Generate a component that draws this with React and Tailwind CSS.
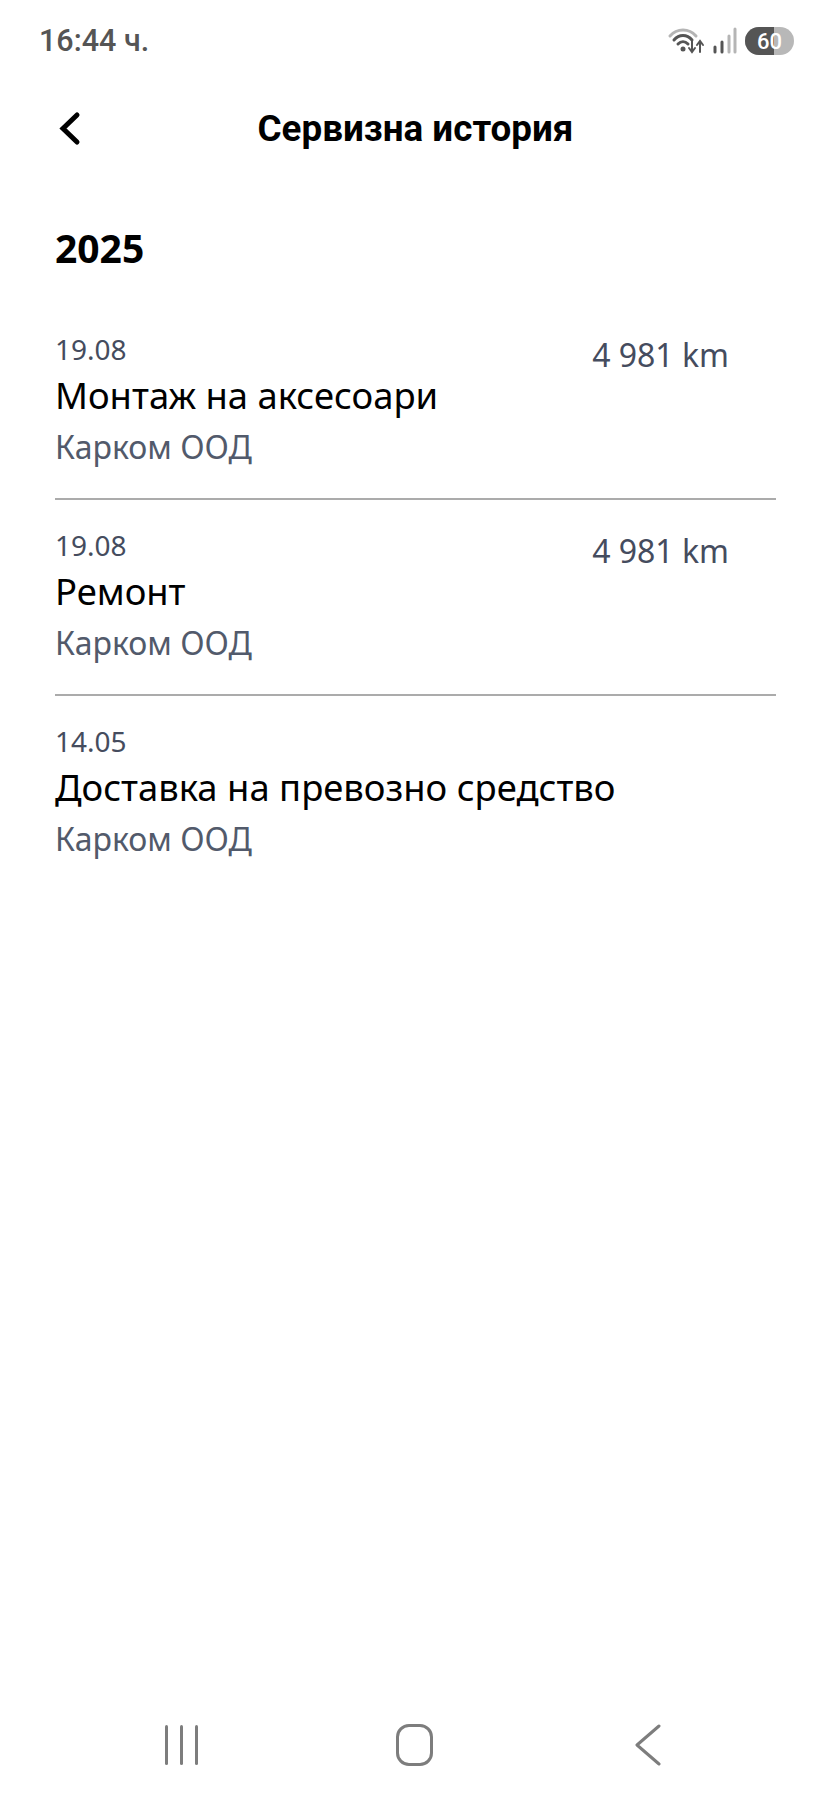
const Row = ({ date, title, km, last }) => (
  <div className={`flex h-[196px] justify-between pt-[27px] ${last ? "" : "border-b-2 border-[#ababab]"}`}>
    <div className="flex flex-col">
      <div className="text-[28px] leading-[36px] text-[#454c5e]">{date}</div>
      <div className="mt-[3px] text-[36.4px] leading-[50px] text-black">{title}</div>
      <div className="mt-[4px] text-[32px] leading-[46px] text-[#525a6b]">Карком ООД</div>
    </div>
    {km && <div className="mr-[47px] mt-[2px] text-[32px] leading-[44px] text-[#454c5e]">{km}</div>}
  </div>
);

export default function App() {
  return (
    <div className="flex h-[1800px] w-[831px] flex-col bg-white font-['Noto_Sans',sans-serif]">
      <div className="flex h-[82px] items-center justify-between pl-[39px] pr-[37px]">
        <span className="font-['Roboto',sans-serif] text-[30.5px] font-medium text-[#555555]">16:44 ч.</span>
        <div className="flex items-center gap-[7px]">
          <svg width="38" height="30" viewBox="0 0 36 30" fill="none" strokeLinecap="round">
            <path d="M2 10C9 2 21 2 28 10" stroke="#b5b5b5" strokeWidth="3" />
            <path d="M6 14C11 8 19 8 24 14" stroke="#555" strokeWidth="3" />
            <path d="M10 18C13 15 17 15 20 18" stroke="#555" strokeWidth="3" />
            <circle cx="15" cy="23" r="2.5" fill="#555" />
            <path d="M24 15V25M21 22L24 26L27 22" stroke="#555" strokeWidth="2" />
            <path d="M32 26V16M29 19L32 15L35 19" stroke="#555" strokeWidth="2" />
          </svg>
          <svg width="26" height="28" viewBox="0 0 24 28" fill="none" strokeLinecap="round" strokeWidth="3">
            <path d="M2 25V20" stroke="#555" />
            <path d="M9 25V15" stroke="#555" />
            <path d="M16 25V9" stroke="#b5b5b5" />
            <path d="M22 25V2" stroke="#b5b5b5" />
          </svg>
          <div className="relative flex h-[28px] w-[49px] items-center justify-center overflow-hidden rounded-full bg-[#b8b8b8]">
            <div className="absolute inset-y-0 left-0 w-[29px] bg-[#555555]" />
            <span className="relative font-['Roboto',sans-serif] text-[22px] font-medium text-white">60</span>
          </div>
        </div>
      </div>

      <div className="relative flex h-[94px] items-center justify-center">
        <svg className="absolute left-[58px] top-[28px]" width="24" height="38" viewBox="0 0 24 38" fill="none" stroke="#000" strokeWidth="5" strokeLinecap="round">
          <path d="M19 5L5 18.5L19 32" />
        </svg>
        <span className="font-['Roboto',sans-serif] text-[36.8px] font-bold text-black">Сервизна история</span>
      </div>

      <div className="px-[55px] pt-[47px]">
        <div className="text-[39px] font-bold leading-[50px] text-black">2025</div>
        <div className="mt-[31px] w-[721px]">
          <Row date="19.08" title="Монтаж на аксесоари" km="4 981 km" />
          <Row date="19.08" title="Ремонт" km="4 981 km" />
          <Row date="14.05" title="Доставка на превозно средство" last />
        </div>
      </div>

      <div className="mt-auto flex h-[103px] items-start pt-[27px]">
        <div className="ml-[165px] flex h-[42px] items-center gap-[12px]">
          <span className="h-[40px] w-[3px] rounded-full bg-[#7d7d7d]" />
          <span className="h-[40px] w-[3px] rounded-full bg-[#7d7d7d]" />
          <span className="h-[40px] w-[3px] rounded-full bg-[#7d7d7d]" />
        </div>
        <div className="ml-[198px] h-[42px] w-[37px] rounded-[13px] border-[3px] border-[#7d7d7d]" />
        <svg className="ml-[201px]" width="28" height="42" viewBox="0 0 28 42" fill="none" stroke="#7d7d7d" strokeWidth="3" strokeLinecap="round" strokeLinejoin="round">
          <path d="M25 2L3 21L25 40" />
        </svg>
      </div>
    </div>
  );
}
